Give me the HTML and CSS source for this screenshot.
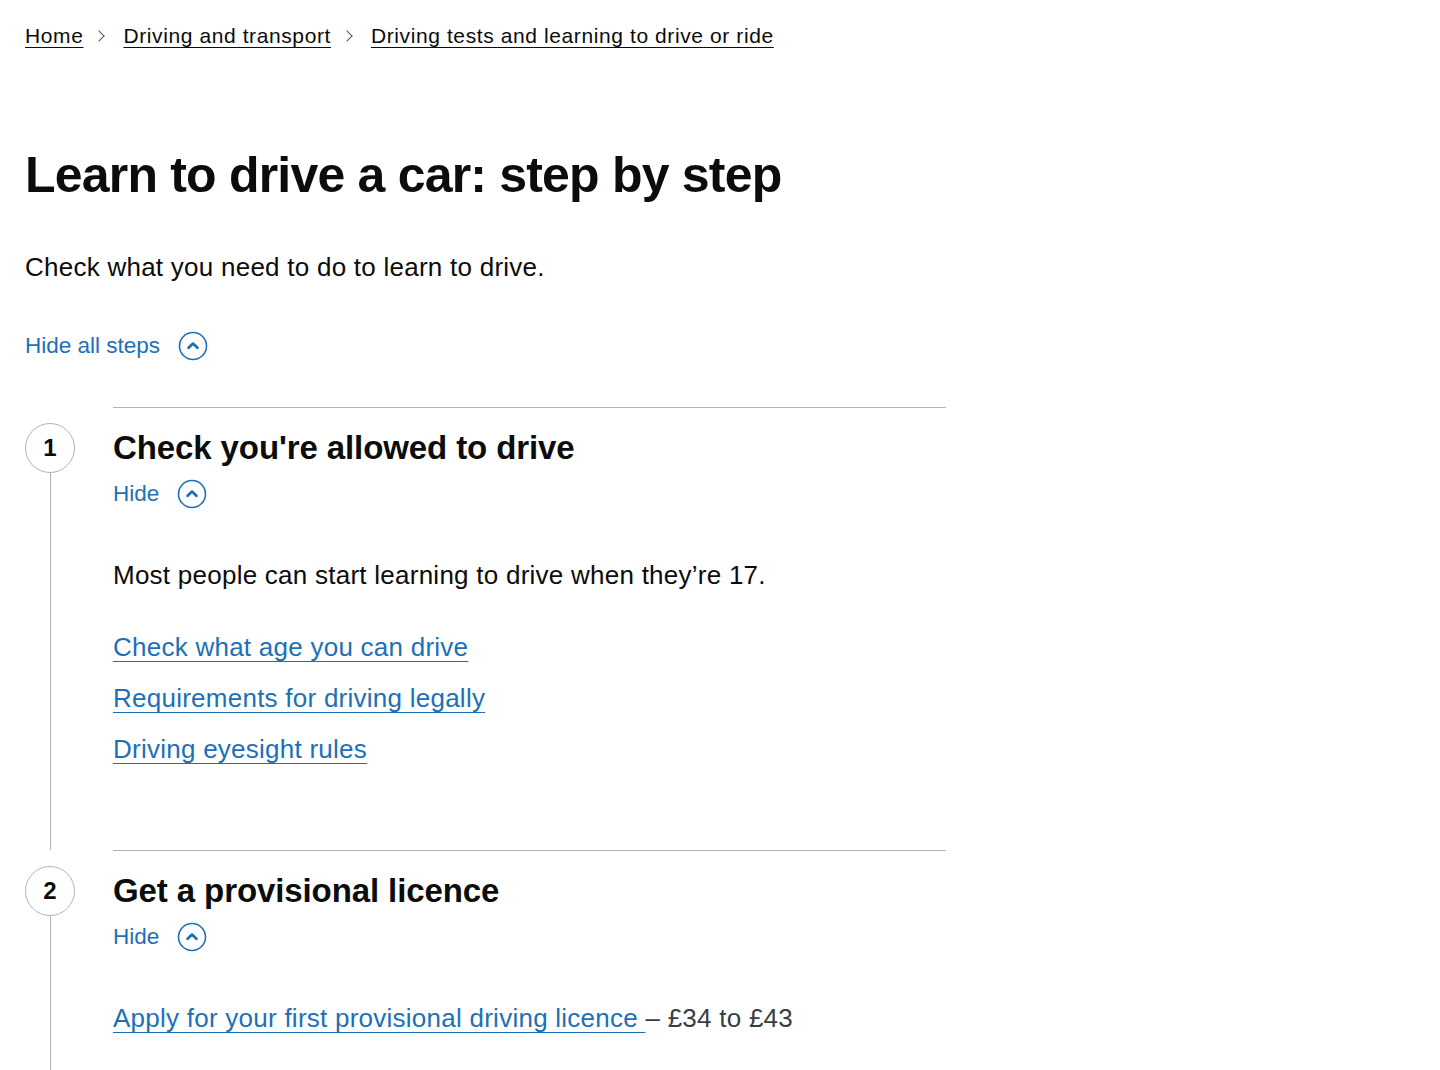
FILE: index.html
```html
<!DOCTYPE html>
<html lang="en">
<head>
<meta charset="utf-8">
<title>Learn to drive a car: step by step</title>
<link rel="stylesheet" href="styles.css">
</head>
<body>
<div class="page">
  <nav class="breadcrumbs">
    <ol>
      <li><a href="#">Home</a></li>
      <li><span class="chev"></span><a href="#">Driving and transport</a></li>
      <li><span class="chev"></span><a href="#">Driving tests and learning to drive or ride</a></li>
    </ol>
  </nav>

  <h1 class="title">Learn to drive a car: step by step</h1>
  <p class="lead">Check what you need to do to learn to drive.</p>

  <button class="toggle toggle-all" type="button">
    <span>Hide all steps</span>
    <svg class="chev-icon" viewBox="0 0 30 30" width="30" height="30" aria-hidden="true"><circle cx="15" cy="15" r="13.5" fill="none" stroke="#1d70b8" stroke-width="1.6"/><path d="M10.6 16.8 L15 12.6 L19.4 16.8" fill="none" stroke="#1d70b8" stroke-width="2.8" stroke-linecap="round" stroke-linejoin="round"/></svg>
  </button>

  <ol class="steps">
    <li class="step">
      <div class="rail">
        <span class="num">1</span>
        <span class="line"></span>
      </div>
      <div class="step-body">
        <h2 class="step-title">Check you're allowed to drive</h2>
        <button class="toggle" type="button">
          <span>Hide</span>
          <svg class="chev-icon" viewBox="0 0 30 30" width="30" height="30" aria-hidden="true"><circle cx="15" cy="15" r="13.5" fill="none" stroke="#1d70b8" stroke-width="1.6"/><path d="M10.6 16.8 L15 12.6 L19.4 16.8" fill="none" stroke="#1d70b8" stroke-width="2.8" stroke-linecap="round" stroke-linejoin="round"/></svg>
        </button>
        <div class="panel">
          <p class="text">Most people can start learning to drive when they’re 17.</p>
          <ul class="links">
            <li><a href="#">Check what age you can drive</a></li>
            <li><a href="#">Requirements for driving legally</a></li>
            <li><a href="#">Driving eyesight rules</a></li>
          </ul>
        </div>
      </div>
    </li>
    <li class="step">
      <div class="rail">
        <span class="num">2</span>
        <span class="line"></span>
      </div>
      <div class="step-body">
        <h2 class="step-title">Get a provisional licence</h2>
        <button class="toggle" type="button">
          <span>Hide</span>
          <svg class="chev-icon" viewBox="0 0 30 30" width="30" height="30" aria-hidden="true"><circle cx="15" cy="15" r="13.5" fill="none" stroke="#1d70b8" stroke-width="1.6"/><path d="M10.6 16.8 L15 12.6 L19.4 16.8" fill="none" stroke="#1d70b8" stroke-width="2.8" stroke-linecap="round" stroke-linejoin="round"/></svg>
        </button>
        <div class="panel">
          <ul class="links">
            <li><a href="#">Apply for your first provisional driving licence </a><span class="cost">– £34 to £43</span></li>
          </ul>
        </div>
      </div>
    </li>
  </ol>
</div>
</body>
</html>
```

FILE: styles.css
```css
* { box-sizing: border-box; }
html, body { margin: 0; padding: 0; background: #ffffff; }
body {
  font-family: "Liberation Sans", Arial, sans-serif;
  color: #0b0c0c;
  overflow: hidden;
  height: 1070px;
}
.page { padding: 0 25px; }

.breadcrumbs { padding-top: 22px; }
.breadcrumbs ol { list-style: none; margin: 0; padding: 0; display: flex; align-items: center; }
.breadcrumbs li { display: flex; align-items: center; font-size: 21px; line-height: 28px; letter-spacing: 0.6px; }
.breadcrumbs a { color: #0b0c0c; text-decoration: underline; text-decoration-thickness: 1px; text-underline-offset: 4px; }
.chev {
  display: inline-block; width: 8px; height: 8px;
  border-top: 1.5px solid #505a5f; border-right: 1.5px solid #505a5f;
  transform: rotate(45deg);
  margin: 0 20px 0 12px;
}

.title {
  margin: 0; padding-top: 95px;
  font-size: 50px; line-height: 60px; font-weight: 700; letter-spacing: -0.8px;
}
.lead { margin: 46px 0 0; font-size: 26px; line-height: 32px; letter-spacing: 0.25px; }

.toggle {
  display: flex; align-items: center; gap: 18px;
  background: none; border: 0; padding: 0; margin: 0;
  font-family: inherit; font-size: 22.5px; line-height: 28px; color: #1d70b8; cursor: pointer;
}
.toggle-all { margin-top: 48px; }
.chev-icon { display: block; }

.steps { list-style: none; margin: 46px 0 0; padding: 0; width: 921px; }
.step { display: flex; }
.rail { display: flex; flex-direction: column; align-items: center; flex: none; width: 50px; margin-right: 38px; }
.num {
  flex: none; margin-top: 16px;
  width: 50px; height: 50px; border-radius: 50%;
  border: 1px solid #b1b4b6; background: #fff;
  display: flex; align-items: center; justify-content: center;
  font-size: 24px; font-weight: 700;
}
.line { flex: 1; width: 1px; background: #b1b4b6; }
.step-body { flex: 1; border-top: 1px solid #b1b4b6; padding-top: 21px; }
.step-title { margin: 0; font-size: 33px; line-height: 38px; font-weight: 700; letter-spacing: -0.1px; }
.step-body .toggle { margin-top: 12px; }
.panel { padding-top: 50px; padding-bottom: 66px; }
.text { margin: 0 0 40px; font-size: 26px; line-height: 32px; letter-spacing: 0.25px; }
.links { list-style: none; margin: 0; padding: 0; }
.links li { font-size: 26px; line-height: 32px; margin-bottom: 19px; letter-spacing: 0.25px; }
.links a { color: #1d70b8; text-decoration: underline; text-decoration-thickness: 1px; text-underline-offset: 5px; }
.cost { color: #383f43; }
```
